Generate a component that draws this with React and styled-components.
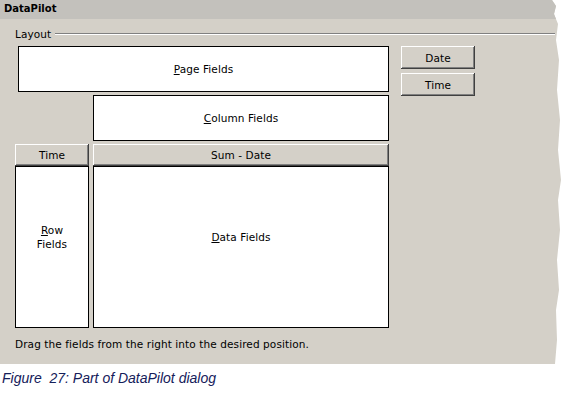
import React from 'react';
import styled, { createGlobalStyle } from 'styled-components';

const GlobalStyle = createGlobalStyle`
  body {
    margin: 0;
    background: #ffffff;
  }
`;

const raised = `
  background: #d4d0c8;
  border: none;
  box-shadow: inset -1px -1px #404040, inset 1px 1px #ffffff, inset -2px -2px #808080;
`;

const Dialog = styled.div`
  width: 562px;
  height: 364px;
  background: #d4d0c8;
  font-family: "DejaVu Sans", sans-serif;
  font-size: 10.5px;
  letter-spacing: 0.1px;
  color: #000;
  display: flex;
  flex-direction: column;
  clip-path: polygon(
    0 0, 552px 0, 556px 6px, 554px 14px, 558px 24px, 556px 40px, 559px 60px,
    557px 90px, 560px 120px, 558px 150px, 561px 180px, 558px 200px, 560px 230px,
    557px 260px, 559px 290px, 556px 310px, 557px 340px, 555px 364px, 0 364px
  );
`;

const TitleBar = styled.div`
  height: 19px;
  line-height: 18px;
  padding-left: 4px;
  background: #c3c1bc;
  font-size: 10px;
  font-weight: bold;
  letter-spacing: 0;
`;

const Legend = styled.div`
  display: flex;
  align-items: center;
  height: 14px;
  margin-top: 8px;
  padding-left: 15px;
  line-height: 14px;
  span {
    margin-right: 4px;
  }
`;

const Rule = styled.div`
  flex: 1;
  margin-right: 7px;
  border-top: 1px solid #808080;
  border-bottom: 1px solid #ffffff;
`;

const Content = styled.div`
  display: flex;
  gap: 12px;
  margin-top: 5px;
  padding-left: 15px;
`;

const FieldGrid = styled.div`
  display: grid;
  grid-template-columns: 74px 296px;
  grid-template-rows: 46px 46px 184px;
  column-gap: 4px;
  row-gap: 3px;
`;

const Box = styled.div`
  box-sizing: border-box;
  border: 1px solid #000;
  background: #fff;
  display: flex;
  align-items: center;
  justify-content: center;
  text-align: center;
  line-height: 14px;
`;

const PageBox = styled(Box)`
  grid-column: 1 / 3;
  margin-left: 3px;
`;

const ColumnBox = styled(Box)`
  grid-column: 2;
`;

const Stack = styled.div`
  display: flex;
  flex-direction: column;
`;

const Header = styled.div`
  ${raised}
  box-sizing: border-box;
  height: 22px;
  padding-top: 1px;
  line-height: 21px;
  text-align: center;
`;

const BodyBox = styled(Box)`
  height: 162px;
  padding-bottom: 20px;
`;

const Buttons = styled.div`
  display: flex;
  flex-direction: column;
  gap: 4px;
`;

const FieldButton = styled.button`
  ${raised}
  width: 74px;
  height: 23px;
  padding: 0;
  font-family: inherit;
  font-size: inherit;
  letter-spacing: inherit;
  color: #000;
`;

const Hint = styled.div`
  margin-top: 9px;
  padding-left: 15px;
  line-height: 14px;
`;

const Caption = styled.div`
  margin-top: 6px;
  padding-left: 2px;
  font-family: "Liberation Sans", Arial, sans-serif;
  font-style: italic;
  font-size: 14px;
  line-height: 16px;
  color: #15205a;
  white-space: pre;
`;

const App = () => {
  return (
    <>
      <GlobalStyle />
      <Dialog>
        <TitleBar>DataPilot</TitleBar>
        <Legend>
          <span>Layout</span>
          <Rule />
        </Legend>
        <Content>
          <FieldGrid>
            <PageBox>
              <span>
                <u>P</u>age Fields
              </span>
            </PageBox>
            <ColumnBox>
              <span>
                <u>C</u>olumn Fields
              </span>
            </ColumnBox>
            <Stack>
              <Header>Time</Header>
              <BodyBox>
                <span>
                  <u>R</u>ow
                  <br />
                  Fields
                </span>
              </BodyBox>
            </Stack>
            <Stack>
              <Header>Sum - Date</Header>
              <BodyBox>
                <span>
                  <u>D</u>ata Fields
                </span>
              </BodyBox>
            </Stack>
          </FieldGrid>
          <Buttons>
            <FieldButton>Date</FieldButton>
            <FieldButton>Time</FieldButton>
          </Buttons>
        </Content>
        <Hint>Drag the fields from the right into the desired position.</Hint>
      </Dialog>
      <Caption>{'Figure  27: Part of DataPilot dialog'}</Caption>
    </>
  );
};

export default App;
